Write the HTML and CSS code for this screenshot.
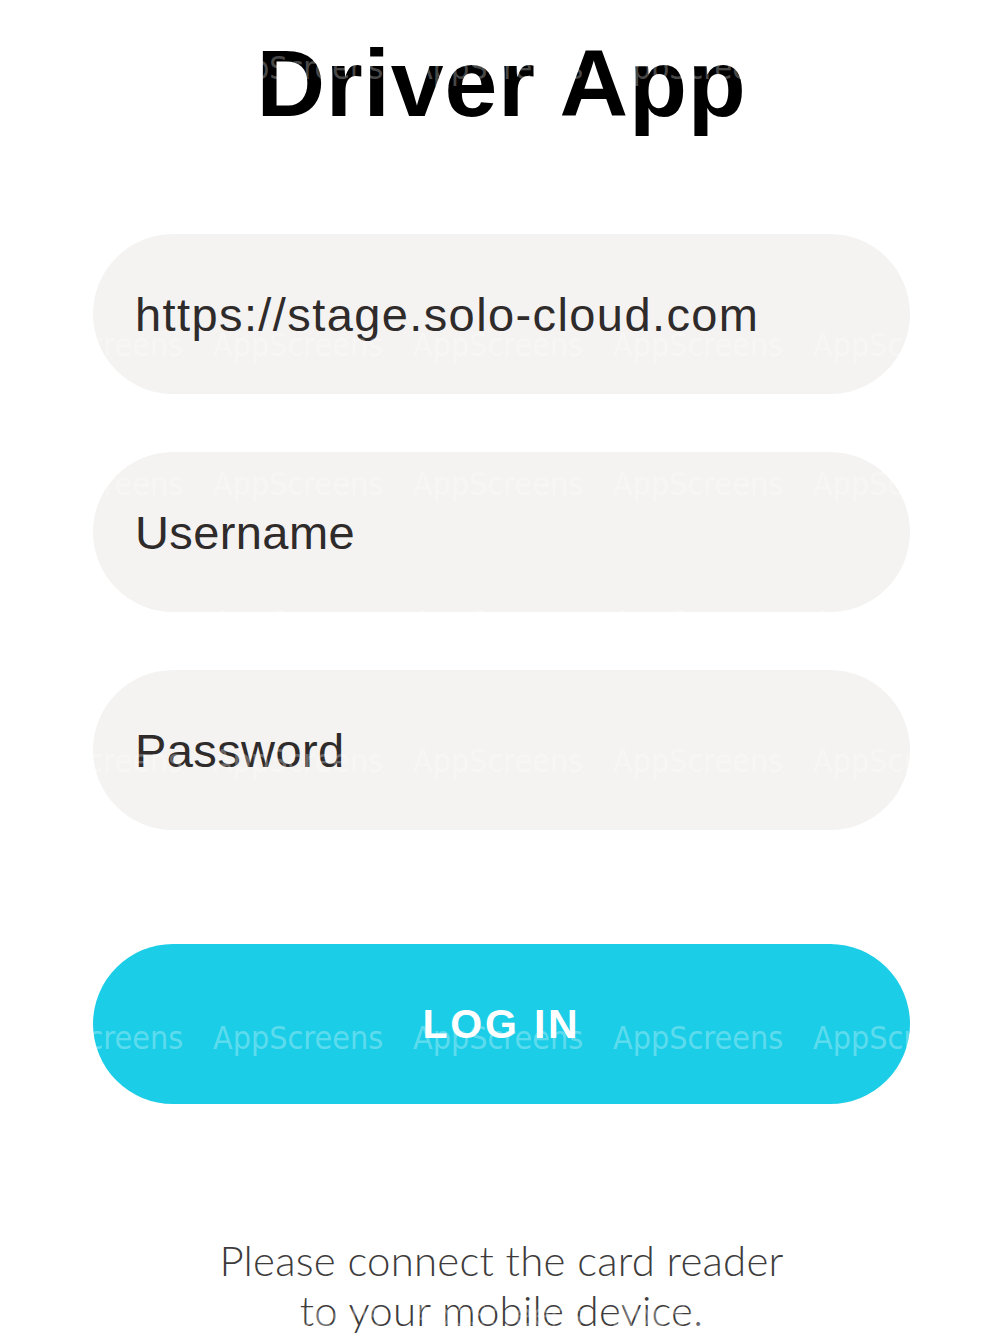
FILE: index.html
```html
<!DOCTYPE html>
<html lang="en">
<head>
<meta charset="utf-8">
<title>Driver App</title>
<link rel="stylesheet" href="styles.css">
</head>
<body>
<main class="screen">
  <h1 class="title">Driver App</h1>
  <form class="login-form">
    <div class="field"><span class="field-text field-text--url">https://stage.solo-cloud.com</span></div>
    <div class="field"><span class="field-text">Username</span></div>
    <div class="field"><span class="field-text">Password</span></div>
    <button type="button" class="login-btn">LOG IN</button>
  </form>
  <p class="hint">Please connect the card reader<br>to your mobile device.</p>
</main>
<div class="watermark" aria-hidden="true">
  <div class="wm-row"><span>AppScreens</span><span>AppScreens</span><span>AppScreens</span><span>AppScreens</span><span>AppScreens</span></div>
  <div class="wm-row"><span>AppScreens</span><span>AppScreens</span><span>AppScreens</span><span>AppScreens</span><span>AppScreens</span></div>
  <div class="wm-row"><span>AppScreens</span><span>AppScreens</span><span>AppScreens</span><span>AppScreens</span><span>AppScreens</span></div>
  <div class="wm-row"><span>AppScreens</span><span>AppScreens</span><span>AppScreens</span><span>AppScreens</span><span>AppScreens</span></div>
  <div class="wm-row"><span>AppScreens</span><span>AppScreens</span><span>AppScreens</span><span>AppScreens</span><span>AppScreens</span></div>
  <div class="wm-row"><span>AppScreens</span><span>AppScreens</span><span>AppScreens</span><span>AppScreens</span><span>AppScreens</span></div>
  <div class="wm-row"><span>AppScreens</span><span>AppScreens</span><span>AppScreens</span><span>AppScreens</span><span>AppScreens</span></div>
  <div class="wm-row"><span>AppScreens</span><span>AppScreens</span><span>AppScreens</span><span>AppScreens</span><span>AppScreens</span></div>
  <div class="wm-row"><span>AppScreens</span><span>AppScreens</span><span>AppScreens</span><span>AppScreens</span><span>AppScreens</span></div>
  <div class="wm-row"><span>AppScreens</span><span>AppScreens</span><span>AppScreens</span><span>AppScreens</span><span>AppScreens</span></div>
</div>
</body>
</html>
```
FILE: styles.css
```css
* { box-sizing: border-box; }
html, body {
  margin: 0;
  padding: 0;
  background: #ffffff;
}
body {
  width: 1000px;
  height: 1334px;
  overflow: hidden;
  position: relative;
  font-family: "Liberation Sans", Arial, sans-serif;
}
.screen {
  display: flex;
  flex-direction: column;
  align-items: center;
  padding: 36px 90px 0 93px;
}
.title {
  margin: 0;
  font-family: "Liberation Sans", Arial, sans-serif;
  font-weight: 700;
  font-size: 95px;
  line-height: 94px;
  color: #000;
  letter-spacing: 0.8px;
}
.login-form {
  width: 817px;
  margin-top: 104px;
  display: flex;
  flex-direction: column;
  gap: 58px;
}
.field {
  height: 160px;
  border-radius: 80px;
  background: #f4f3f2;
  display: flex;
  align-items: center;
  padding-left: 42px;
}
.field-text {
  font-family: "Liberation Sans", Arial, sans-serif;
  font-size: 47px;
  letter-spacing: 0.4px;
  color: #2f2b2b;
}
.field-text--url {
  letter-spacing: 1.4px;
}
.login-btn {
  margin-top: 56px;
  height: 160px;
  border: none;
  border-radius: 80px;
  background: #1bcde6;
  color: #ffffff;
  font-family: "Liberation Sans", Arial, sans-serif;
  font-weight: 700;
  font-size: 41px;
  letter-spacing: 2.8px;
  padding: 0;
}
.hint {
  margin: 131px 0 0;
  text-align: center;
  font-family: Lato, "Noto Sans", sans-serif;
  font-weight: 300;
  font-size: 42px;
  line-height: 50px;
  letter-spacing: 0.2px;
  color: #3e3c3c;
}
.watermark {
  position: absolute;
  top: -1px;
  left: 0;
  width: 1000px;
  height: 1340px;
  overflow: hidden;
  pointer-events: none;
  display: flex;
  flex-direction: column;
}
.wm-row {
  height: 138.5px;
  flex: 0 0 138.5px;
  display: flex;
  align-items: center;
  padding-left: 13px;
}
.wm-row span {
  flex: 0 0 200px;
  font-family: "DejaVu Sans Condensed", "DejaVu Sans", sans-serif;
  font-weight: 400;
  font-size: 32px;
  color: rgba(255, 255, 255, 0.3);
  white-space: nowrap;
}
```
